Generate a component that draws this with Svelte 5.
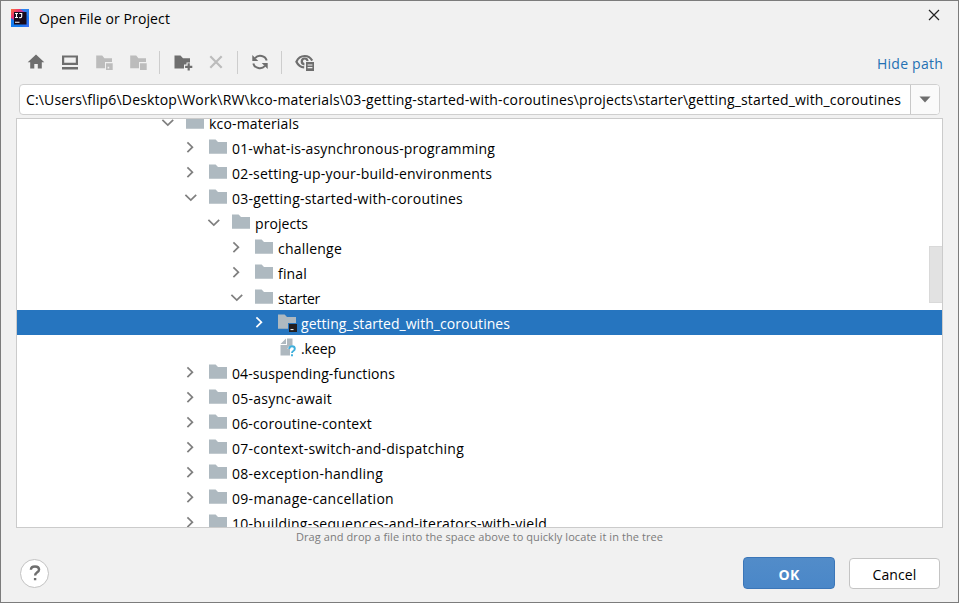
<script>
  // depth, label, label width and the kind of row (open folder, closed folder, file)
  const rows = [
    { depth: 0, label: 'kco-materials', w: 90, open: true },
    { depth: 1, label: '01-what-is-asynchronous-programming', w: 263 },
    { depth: 1, label: '02-setting-up-your-build-environments', w: 260 },
    { depth: 1, label: '03-getting-started-with-coroutines', w: 231, open: true },
    { depth: 2, label: 'projects', w: 53, open: true },
    { depth: 3, label: 'challenge', w: 64 },
    { depth: 3, label: 'final', w: 29 },
    { depth: 3, label: 'starter', w: 42, open: true },
    { depth: 4, label: 'getting_started_with_coroutines', w: 209, selected: true },
    { depth: 4, label: '.keep', w: 35, file: true },
    { depth: 1, label: '04-suspending-functions', w: 163 },
    { depth: 1, label: '05-async-await', w: 100 },
    { depth: 1, label: '06-coroutine-context', w: 140 },
    { depth: 1, label: '07-context-switch-and-dispatching', w: 232 },
    { depth: 1, label: '08-exception-handling', w: 151 },
    { depth: 1, label: '09-manage-cancellation', w: 162 },
    { depth: 1, label: '10-building-sequences-and-iterators-with-yield', w: 315 }
  ];

  // Spreads the letters of a label so that it takes the given width.
  function fit(node, width) {
    const natural = node.getBoundingClientRect().width;
    node.style.letterSpacing = (width - natural) / node.textContent.length + 'px';
  }
</script>

<div class="dialog">
  <header>
    <svg class="logo" width="18" height="18" viewBox="0 0 18 18">
      <defs>
        <linearGradient id="lg" x1="0" y1="0" x2="1" y2="1">
          <stop offset="0" stop-color="#f97a3c" />
          <stop offset="0.25" stop-color="#f0316b" />
          <stop offset="0.48" stop-color="#7a4fd0" />
          <stop offset="0.65" stop-color="#1478f0" />
          <stop offset="1" stop-color="#3f6ff5" />
        </linearGradient>
      </defs>
      <rect width="18" height="18" fill="url(#lg)" />
      <path d="M0 9V18H12L6 14Z" fill="#137cf0" />
      <path d="M9 0H18V9L14 3Z" fill="#2a83ef" />
      <rect x="3" y="3" width="12.5" height="12.5" fill="#160a1c" />
      <path d="M4 4.5H7M5.5 4.5V8.5M4 8.5H7M8.3 4.5H10.7V7.4Q10.7 8.6 9.4 8.6H8.2M4 13.2H8.5" stroke="#fff" stroke-width="1.1" fill="none" />
    </svg>
    <span class="title"><span use:fit={131}>Open File or Project</span></span>
    <svg class="close" width="12" height="12" viewBox="0 0 12 12"><path d="M1 1L11 11M11 1L1 11" stroke="#222" stroke-width="1.2" /></svg>
  </header>

  <div class="toolbar">
    <svg width="20" height="20" viewBox="0 0 20 20"><path d="M10 2.6L18.3 10.3H15.8V16.6H11.8V12H8.3V16.6H4.2V10.3H1.7Z" fill="#6e6e6e" /></svg>
    <svg width="20" height="20" viewBox="0 0 20 20"><path d="M2 3.4H18V13H2ZM4.2 5.6V10.8H15.8V5.6ZM2 15H18V17.4H2Z" fill="#6e6e6e" fill-rule="evenodd" /></svg>
    <svg width="20" height="20" viewBox="0 0 20 20"><path d="M2.2 3.6H8.2L10.4 6.2H18V10H11V16.2H2.2ZM12 11.2H18.7V18H12ZM13.6 14.8V16.4H15.2V14.8Z" fill="#bcbcbc" fill-rule="evenodd" /></svg>
    <svg width="20" height="20" viewBox="0 0 20 20"><path d="M2.2 3.6H8.2L10.4 6.2H18V10H11V16.2H2.2ZM12 11.2H18.7V18H12Z" fill="#bcbcbc" /></svg>
    <i></i>
    <svg width="20" height="20" viewBox="0 0 20 20"><path d="M1.5 3.6H7.5L10 6.2H17V10.5H13.5V12.5H11V16.4H1.5Z" fill="#6e6e6e" /><path d="M15.7 11.2V18.4M12.1 14.8H19.3" stroke="#6e6e6e" stroke-width="2.2" /></svg>
    <svg width="20" height="20" viewBox="0 0 20 20"><path d="M3.3 4.3L14.7 15.7M14.7 4.3L3.3 15.7" stroke="#bcbcbc" stroke-width="2.2" /></svg>
    <i class="mid"></i>
    <svg width="20" height="20" viewBox="0 0 20 20"><g fill="none" stroke="#6e6e6e" stroke-width="2"><path d="M16.7 8.6A6.7 6.2 0 0 0 5 6.1" /><path d="M3.3 11.4A6.7 6.2 0 0 0 15 13.9" /></g><path d="M2.3 3V9H8.3ZM17.7 17V11H11.7Z" fill="#6e6e6e" /></svg>
    <i></i>
    <svg width="20" height="20" viewBox="0 0 20 20"><path d="M17.2 8.6C15.5 5.5 12.8 4 9.7 4C6 4 3 6.2 1.4 9.7C3 13 5.8 15.2 9.2 15.4" fill="none" stroke="#6e6e6e" stroke-width="2.2" /><path d="M13.6 8.8A4 4 0 1 0 9.4 13.4V9.5H13.4Z" fill="#6e6e6e" /><circle cx="9.7" cy="9.3" r="1.7" fill="#f1f1f1" /><path d="M10 9.2H19.6V19.4H10Z" fill="#f1f1f1" /><path d="M11 10H19V19H11Z" fill="#6e6e6e" /><path d="M12.6 13H17.4M12.6 15.7H17.4" stroke="#f1f1f1" stroke-width="1.2" /></svg>
    <span class="hide"><span use:fit={66}>Hide path</span></span>
  </div>

  <div class="path">
    <div class="value"><span use:fit={875}>C:\Users\flip6\Desktop\Work\RW\kco-materials\03-getting-started-with-coroutines\projects\starter\getting_started_with_coroutines</span></div>
    <div class="drop"><svg width="12" height="7" viewBox="0 0 12 7"><path d="M0.5 0.5H11.5L6 6.5Z" fill="#6e6e6e" /></svg></div>
  </div>

  <div class="tree">
    <div class="rows">
      {#each rows as row}
        <div class="row" class:selected={row.selected} style="padding-left: {142 + row.depth * 23}px">
          <svg class="arrow" width="16" height="25" viewBox="0 0 16 25">
            {#if row.open}
              <path d="M3.4 9.8L8.8 15L14.2 9.8" />
            {:else if !row.file}
              <path d="M5.4 7.3L10.4 12.2L5.4 17.1" />
            {/if}
          </svg>
          <svg class="icon" width="20" height="25" viewBox="0 0 20 25">
            {#if row.file}
              <path d="M9 3.5V9H3.5ZM10 3.5H15.5V10.5Q11 10.5 10.5 14H13V20.5H3.5V10H10Z" fill="#aeb8bf" />
              <path d="M12.2 14Q12.2 11.3 15 11.3T17.8 13.8Q17.8 15.2 16.3 16Q15 16.8 15 18M15 19.3V21.3" fill="none" stroke="#3fafdc" stroke-width="1.9" />
            {:else}
              <path d="M1 4.5H7.6L10 7H19V18.7H1Z" fill="#aeb9c0" />
              {#if row.selected}
                <rect x="11" y="13" width="9" height="9" fill="#2675bf" />
                <rect x="12" y="14" width="8" height="8" fill="#231f20" /><path d="M13.5 19.6H16.5" stroke="#fff" />
              {/if}
            {/if}
          </svg>
          <span class="label"><span use:fit={row.w}>{row.label}</span></span>
        </div>
      {/each}
    </div>
    <div class="thumb"></div>
  </div>

  <p class="hint"><span use:fit={367}>Drag and drop a file into the space above to quickly locate it in the tree</span></p>

  <footer>
    <button class="help" aria-label="Help"><svg width="14" height="18" viewBox="0 0 14 18"><path d="M2.9 5.8Q3 2.5 7 2.5T11.1 5.6Q11.1 7.2 9 8.4Q7.1 9.6 7.1 11.6M7.1 14V16.3" fill="none" stroke="#6e6e6e" stroke-width="2.4" /></svg></button>
    <button class="ok"><span use:fit={21}>OK</span></button>
    <button class="cancel"><span use:fit={44}>Cancel</span></button>
  </footer>
</div>

<style>
  :global(body) { margin: 0; }
  .dialog {
    box-sizing: border-box; width: 959px; height: 603px; overflow: hidden;
    display: flex; flex-direction: column;
    background: #f1f1f1; border: 1px solid #7c7c7c;
    font-family: 'Open Sans', 'Noto Sans', sans-serif; font-size: 14px; color: #000;
    white-space: nowrap;
  }
  header { display: flex; height: 36px; flex: none; padding: 0 18px 0 10px; align-items: flex-start; }
  .logo { margin-top: 8px; }
  .title { margin-left: 10px; line-height: 35px; flex: 1; }
  .close { margin-top: 8px; }
  .toolbar { display: flex; align-items: center; height: 47px; flex: none; padding: 3px 15px 0 25px; box-sizing: border-box; }
  .toolbar svg { margin-right: 14px; flex: none; }
  .toolbar i { width: 1px; height: 23px; background: #cdcdcd; margin: 0 13px 0 -3px; flex: none; }
  .toolbar i.mid { margin: 0 12px 0 -4px; }
  .hide { margin-left: auto; color: #2470b3; line-height: 20px; padding-top: 3px; }
  .path {
    display: flex; box-sizing: border-box; width: 921px; height: 31px; margin-left: 18px; flex: none;
    border: 1.5px solid #cfcfcf; border-radius: 4px; background: #fff; overflow: hidden;
  }
  .value { flex: 1; padding-left: 6px; line-height: 30px; }
  .drop { width: 28px; border-left: 1px solid #c8c8c8; display: flex; align-items: center; justify-content: center; background: #fafafa; }
  .drop svg { margin-right: 1px; }
  .tree {
    position: relative; box-sizing: border-box; width: 927px; height: 410px; margin: 3px 0 0 15px; flex: none;
    border: 1px solid #cbcbcb; background: #fff; overflow: hidden;
  }
  .rows { margin-top: -9px; }
  .row { display: flex; height: 25px; }
  .row svg { flex: none; }
  .arrow path { fill: none; stroke: #7f7f7f; stroke-width: 1.7; }
  .icon { margin-left: 10px; }
  .label { margin-left: 4px; line-height: 28px; }
  .selected { background: #2675bf; color: #fff; }
  .selected .arrow path { stroke: #fff; }
  .thumb { position: absolute; right: 0; top: 127px; width: 13px; height: 57px; box-sizing: border-box; background: #e2e2e2; border: 1px solid #d9d9d9; border-right: 0; }
  .hint { margin: 0; padding-left: 295px; font-size: 11px; line-height: 18px; color: #7b7b7b; flex: none; }
  footer { display: flex; align-items: center; padding: 11px 18px 0 19px; }
  button { box-sizing: border-box; font: inherit; padding: 0; }
  .help { width: 29px; height: 29px; border-radius: 50%; background: #fff; border: 1px solid #c2c2c2; display: flex; align-items: center; justify-content: center; margin-right: auto; }
  .ok { width: 92px; height: 32px; border: 1px solid #3b76b8; border-radius: 4px; background: linear-gradient(#528cc9, #4a87c8); color: #fff; font-weight: 700; }
  .cancel { width: 91px; height: 31px; margin-left: 14px; border: 1px solid #c4c4c4; border-radius: 4px; background: #fff; color: #000; }
  .ok span, .cancel span { position: relative; top: 1px; }
</style>
